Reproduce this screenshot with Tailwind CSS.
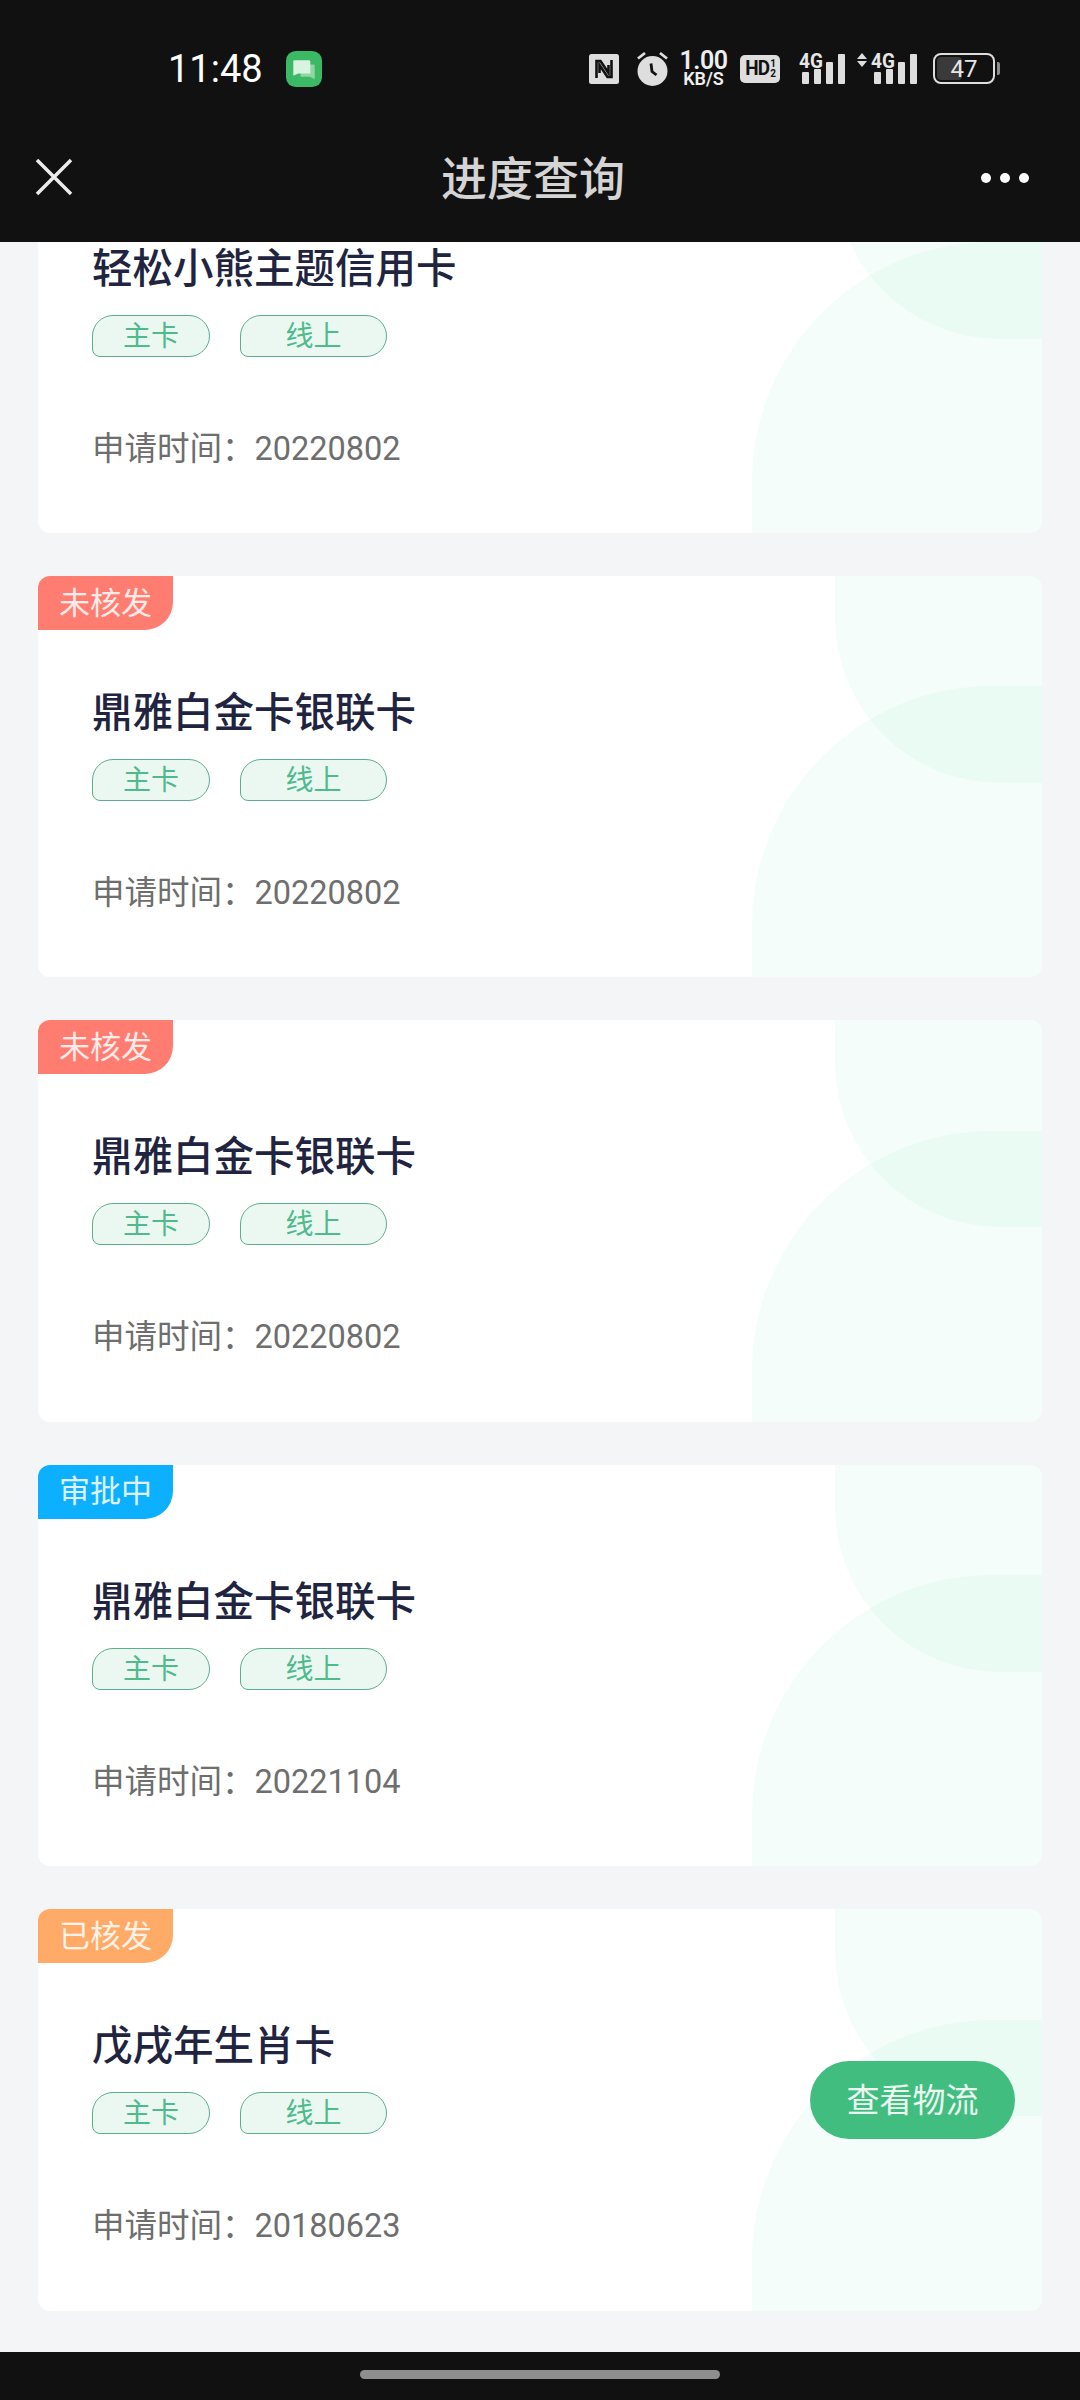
<!DOCTYPE html>
<html lang="zh-CN">
  <head>
    <meta charset="UTF-8" />
    <meta name="viewport" content="width=device-width, initial-scale=1.0" />
    <script src="https://cdn.jsdelivr.net/npm/@tailwindcss/browser@4"></script>
    <title>进度查询</title>
  </head>
  <body>
    <div class="w-[1080px] h-[2400px] flex flex-col overflow-hidden bg-[#f4f5f7] font-['Roboto','Noto_Sans_CJK_SC',sans-serif]">

      <!-- status bar + title bar -->
      <header class="relative z-10 h-[242px] shrink-0 bg-[#111112]">
        <div class="flex items-center h-[137px] pl-[168px]">
          <span class="text-[38px] leading-none text-white w-[118px]">11:48</span>
          <svg class="w-[36px] h-[36px]" viewBox="0 0 37 37">
            <rect width="37" height="37" rx="10" fill="#3cb964"/>
            <path d="M15 14h13a1.500 1.500 0 0 1 1.500 1.500V29l-5-2.500H15z" fill="#8fd6a5"/>
            <path d="M8.500 9.500h15a1.500 1.500 0 0 1 1.500 1.500v12H12.500l-5 2.500V10.500a1 1 0 0 1 1-1z" fill="#d8f3df"/>
          </svg>
          <div class="ml-[267px] flex items-center">
            <!-- nfc -->
            <svg class="w-[30px] h-[30px]" viewBox="0 0 30 30">
              <rect width="30" height="30" rx="2.500" fill="#dedede"/>
              <path d="M7.500 24V7h4l8 12V11M22.500 6v17h-4l-8-12v8" fill="none" stroke="#111112" stroke-width="2.600"/>
            </svg>
            <!-- alarm -->
            <svg class="ml-[17px] w-[33px] h-[35px]" viewBox="0 0 33 35">
              <circle cx="16.500" cy="20" r="15" fill="#dedede"/>
              <path d="M2 7.500 9 2M31 7.500 24 2" stroke="#dedede" stroke-width="2.800"/>
              <path d="M15 12.500 16 20.500 20.500 24" fill="none" stroke="#111112" stroke-width="2.800"/>
            </svg>
            <!-- net speed -->
            <div class="ml-[11px] w-[47px] flex flex-col items-center text-[#eeeeee] font-semibold">
              <span class="text-[25px] leading-[20px] tracking-[-0.5px]">1.00</span>
              <span class="text-[18px] leading-[16px]">KB/S</span>
            </div>
            <!-- hd -->
            <div class="ml-[13px] w-[40px] h-[28px] rounded-[5px] bg-[#dedede] flex items-center justify-center text-[#111112] font-bold">
              <span class="text-[21px] leading-none tracking-[-1px] scale-x-90">HD</span>
              <span class="flex flex-col text-[10px] leading-[10px]"><span>1</span><span>2</span></span>
            </div>
            <!-- sim 1 -->
            <div class="ml-[19px] relative w-[46px] h-[32px]">
              <span class="absolute left-0 top-[-2px] text-[20px] leading-[20px] font-bold text-[#e6e6e6] scale-x-95 origin-left">4G</span>
              <svg class="absolute inset-0 w-[46px] h-[32px]" viewBox="0 0 46 32" fill="#dedede">
                <rect x="3" y="19" width="7" height="12" rx="1"/>
                <rect x="15" y="16" width="7" height="15" rx="1"/>
                <rect x="27" y="9" width="7" height="22" rx="1"/>
                <rect x="39" y="1" width="7" height="30" rx="1"/>
              </svg>
            </div>
            <!-- sim 2 -->
            <div class="ml-[12px] relative w-[60px] h-[32px]">
              <svg class="absolute inset-0 w-[60px] h-[32px]" viewBox="0 0 60 32" fill="#dedede">
                <path d="M5 0l5 6H0zM5 14l5-6H0z"/>
                <rect x="17" y="19" width="7" height="12" rx="1"/>
                <rect x="29" y="16" width="7" height="15" rx="1"/>
                <rect x="41" y="9" width="7" height="22" rx="1"/>
                <rect x="53" y="1" width="7" height="30" rx="1"/>
              </svg>
              <span class="absolute left-[14px] top-[-2px] text-[20px] leading-[20px] font-bold text-[#e6e6e6] scale-x-95 origin-left">4G</span>
            </div>
            <!-- battery -->
            <div class="ml-[16px] relative w-[62px] h-[31px] rounded-[8px] border-[2px] border-[#dedede] p-[2px]">
              <div class="w-[47%] h-full rounded-[4px] bg-[#3a3a3a]"></div>
              <span class="absolute inset-0 flex items-center justify-center text-[24px] leading-none text-[#e6e6e6]">47</span>
              <div class="absolute right-[-7px] top-[7px] w-[3px] h-[13px] rounded-r-[2px] bg-[#8c8c8c]"></div>
            </div>
          </div>
        </div>
        <div class="relative flex items-center justify-center h-[82px]">
          <svg class="absolute left-[35px] top-[21px] w-[38px] h-[38px]" viewBox="0 0 38 38">
            <path d="M2 2 36 36M36 2 2 36" stroke="#ececec" stroke-width="3.500"/>
          </svg>
          <span class="text-[46px] leading-none font-medium text-[#d4d4d4] ml-[-14px] mt-[1px]">进度查询</span>
          <div class="absolute right-[51px] top-[36px] flex gap-[9px]">
            <span class="w-[10px] h-[10px] rounded-full bg-white"></span>
            <span class="w-[10px] h-[10px] rounded-full bg-white"></span>
            <span class="w-[10px] h-[10px] rounded-full bg-white"></span>
          </div>
        </div>
      </header>

      <!-- list -->
      <main class="flex-1 min-h-0 overflow-hidden">
        <div class="mt-[-110.4px] px-[38px] flex flex-col gap-[43px]">

          <div class="relative h-[401.4px] rounded-[12px] bg-white overflow-hidden">
            <div class="absolute right-0 top-0 w-[207px] h-[207px] rounded-bl-[165px] bg-[#20e090]/5"></div>
            <div class="absolute right-0 bottom-0 w-[290px] h-[291px] rounded-tl-[240px] bg-[#20e090]/5"></div>
            <div class="relative pl-[54px] pt-[113px]">
              <h3 class="text-[40.5px] leading-[48px] font-medium text-[#1f2540]">轻松小熊主题信用卡</h3>
              <div class="mt-[22px] flex gap-[30px]">
                <span class="w-[118px] h-[42px] pt-[2px] flex items-center justify-center border border-[#5cae8e] bg-[#ebf8f2] rounded-[21px] rounded-bl-[8px] text-[28px] leading-none text-[#4fba8c]">主卡</span>
                <span class="w-[147px] h-[42px] pt-[2px] flex items-center justify-center border border-[#5cae8e] bg-[#ebf8f2] rounded-[21px] rounded-bl-[8px] text-[28px] leading-none text-[#4fba8c]">线上</span>
              </div>
              <p class="mt-[72px] text-[32.5px] leading-[41px] text-[#6e6e6e]">申请时间：20220802</p>
            </div>
          </div>

          <div class="relative h-[401.4px] rounded-[12px] bg-white overflow-hidden">
            <div class="absolute right-0 top-0 w-[207px] h-[207px] rounded-bl-[165px] bg-[#20e090]/5"></div>
            <div class="absolute right-0 bottom-0 w-[290px] h-[291px] rounded-tl-[240px] bg-[#20e090]/5"></div>
            <span class="absolute left-0 top-0 w-[135px] h-[54px] flex items-center justify-center rounded-br-[28px] bg-[#fe7c70] text-[31px] leading-none text-white/85">未核发</span>
            <div class="relative pl-[54px] pt-[113px]">
              <h3 class="text-[40.5px] leading-[48px] font-medium text-[#1f2540]">鼎雅白金卡银联卡</h3>
              <div class="mt-[22px] flex gap-[30px]">
                <span class="w-[118px] h-[42px] pt-[2px] flex items-center justify-center border border-[#5cae8e] bg-[#ebf8f2] rounded-[21px] rounded-bl-[8px] text-[28px] leading-none text-[#4fba8c]">主卡</span>
                <span class="w-[147px] h-[42px] pt-[2px] flex items-center justify-center border border-[#5cae8e] bg-[#ebf8f2] rounded-[21px] rounded-bl-[8px] text-[28px] leading-none text-[#4fba8c]">线上</span>
              </div>
              <p class="mt-[72px] text-[32.5px] leading-[41px] text-[#6e6e6e]">申请时间：20220802</p>
            </div>
          </div>

          <div class="relative h-[401.4px] rounded-[12px] bg-white overflow-hidden">
            <div class="absolute right-0 top-0 w-[207px] h-[207px] rounded-bl-[165px] bg-[#20e090]/5"></div>
            <div class="absolute right-0 bottom-0 w-[290px] h-[291px] rounded-tl-[240px] bg-[#20e090]/5"></div>
            <span class="absolute left-0 top-0 w-[135px] h-[54px] flex items-center justify-center rounded-br-[28px] bg-[#fe7c70] text-[31px] leading-none text-white/85">未核发</span>
            <div class="relative pl-[54px] pt-[113px]">
              <h3 class="text-[40.5px] leading-[48px] font-medium text-[#1f2540]">鼎雅白金卡银联卡</h3>
              <div class="mt-[22px] flex gap-[30px]">
                <span class="w-[118px] h-[42px] pt-[2px] flex items-center justify-center border border-[#5cae8e] bg-[#ebf8f2] rounded-[21px] rounded-bl-[8px] text-[28px] leading-none text-[#4fba8c]">主卡</span>
                <span class="w-[147px] h-[42px] pt-[2px] flex items-center justify-center border border-[#5cae8e] bg-[#ebf8f2] rounded-[21px] rounded-bl-[8px] text-[28px] leading-none text-[#4fba8c]">线上</span>
              </div>
              <p class="mt-[72px] text-[32.5px] leading-[41px] text-[#6e6e6e]">申请时间：20220802</p>
            </div>
          </div>

          <div class="relative h-[401.4px] rounded-[12px] bg-white overflow-hidden">
            <div class="absolute right-0 top-0 w-[207px] h-[207px] rounded-bl-[165px] bg-[#20e090]/5"></div>
            <div class="absolute right-0 bottom-0 w-[290px] h-[291px] rounded-tl-[240px] bg-[#20e090]/5"></div>
            <span class="absolute left-0 top-0 w-[135px] h-[54px] flex items-center justify-center rounded-br-[28px] bg-[#0db0ff] text-[31px] leading-none text-white/85">审批中</span>
            <div class="relative pl-[54px] pt-[113px]">
              <h3 class="text-[40.5px] leading-[48px] font-medium text-[#1f2540]">鼎雅白金卡银联卡</h3>
              <div class="mt-[22px] flex gap-[30px]">
                <span class="w-[118px] h-[42px] pt-[2px] flex items-center justify-center border border-[#5cae8e] bg-[#ebf8f2] rounded-[21px] rounded-bl-[8px] text-[28px] leading-none text-[#4fba8c]">主卡</span>
                <span class="w-[147px] h-[42px] pt-[2px] flex items-center justify-center border border-[#5cae8e] bg-[#ebf8f2] rounded-[21px] rounded-bl-[8px] text-[28px] leading-none text-[#4fba8c]">线上</span>
              </div>
              <p class="mt-[72px] text-[32.5px] leading-[41px] text-[#6e6e6e]">申请时间：20221104</p>
            </div>
          </div>

          <div class="relative h-[401.4px] rounded-[12px] bg-white overflow-hidden">
            <div class="absolute right-0 top-0 w-[207px] h-[207px] rounded-bl-[165px] bg-[#20e090]/5"></div>
            <div class="absolute right-0 bottom-0 w-[290px] h-[291px] rounded-tl-[240px] bg-[#20e090]/5"></div>
            <span class="absolute left-0 top-0 w-[135px] h-[54px] flex items-center justify-center rounded-br-[28px] bg-[#ffaa66] text-[31px] leading-none text-white/85">已核发</span>
            <div class="relative pl-[54px] pt-[113px]">
              <h3 class="text-[40.5px] leading-[48px] font-medium text-[#1f2540]">戊戌年生肖卡</h3>
              <div class="mt-[22px] flex gap-[30px]">
                <span class="w-[118px] h-[42px] pt-[2px] flex items-center justify-center border border-[#5cae8e] bg-[#ebf8f2] rounded-[21px] rounded-bl-[8px] text-[28px] leading-none text-[#4fba8c]">主卡</span>
                <span class="w-[147px] h-[42px] pt-[2px] flex items-center justify-center border border-[#5cae8e] bg-[#ebf8f2] rounded-[21px] rounded-bl-[8px] text-[28px] leading-none text-[#4fba8c]">线上</span>
              </div>
              <p class="mt-[72px] text-[32.5px] leading-[41px] text-[#6e6e6e]">申请时间：20180623</p>
            </div>
            <button class="absolute right-[27px] top-[152px] w-[205px] h-[78px] rounded-full bg-[#41bd80] text-[33px] leading-none text-white/90">查看物流</button>
          </div>

        </div>
      </main>

      <!-- nav bar -->
      <footer class="h-[48px] shrink-0 bg-[#111112] flex justify-center pt-[18px]">
        <div class="w-[360px] h-[9px] rounded-full bg-[#8e8e8e]"></div>
      </footer>
    </div>
  </body>
</html>
